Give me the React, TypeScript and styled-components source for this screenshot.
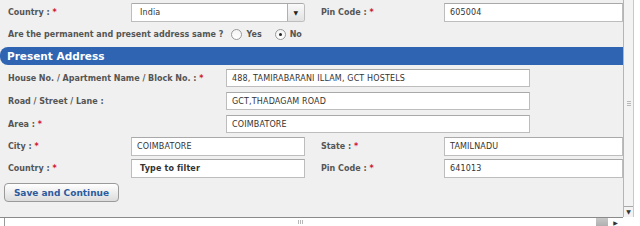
import styled, { createGlobalStyle } from "styled-components";

const GlobalStyle = createGlobalStyle`
  html, body {
    margin: 0;
    padding: 0;
    background: #ffffff;
  }
  body {
    font-family: "DejaVu Sans", Verdana, sans-serif;
  }
`;

const Viewport = styled.div`
  width: 640px;
  height: 226px;
  display: flex;
  flex-direction: column;
  overflow: hidden;
`;

const TopArea = styled.div`
  height: 217px;
  display: flex;
`;

const Content = styled.div`
  width: 623px;
  background: #f0f0f0;
  overflow: hidden;
  display: flex;
  flex-direction: column;
`;

const VScroll = styled.div`
  width: 11px;
  border-left: 1px solid #b5b5b5;
  border-right: 1px solid #c8c8c8;
  background: #f3f3f3;
  display: flex;
  flex-direction: column;
  box-sizing: border-box;
`;

const VThumb = styled.div`
  flex: 1;
  border-bottom: 1px solid #a8a8a8;
  display: flex;
  align-items: center;
  justify-content: center;
`;

const Grip = styled.div<{ $vertical?: boolean }>`
  width: ${({ $vertical }) => ($vertical ? "4px" : "1px")};
  height: ${({ $vertical }) => ($vertical ? "1px" : "4px")};
  box-shadow: ${({ $vertical }) =>
    $vertical
      ? "0 -2px 0 #b8b8b8, 0 2px 0 #b8b8b8"
      : "-2px 0 0 #b8b8b8, 2px 0 0 #b8b8b8"};
  background: #b8b8b8;
`;

const ArrowBox = styled.div`
  height: 10px;
  display: flex;
  align-items: center;
  justify-content: center;
  color: #333;
  font-size: 6px;
  line-height: 1;
`;

const RightEdge = styled.div`
  flex: 1;
  background: #ffffff;
`;

const HScroll = styled.div`
  height: 9px;
  border-top: 1px solid #8a8a8a;
  display: flex;
  box-sizing: border-box;
  width: 623px;
`;

const HTrackStart = styled.div`
  width: 4px;
  border-right: 1px solid #9a9a9a;
`;

const HThumb = styled.div`
  flex: 1;
  background: #ffffff;
  display: flex;
  align-items: center;
  justify-content: center;
`;

const HDark = styled.div`
  width: 12px;
  background: linear-gradient(#c8c8c8, #b0b0b0);
`;

const HArrow = styled.div`
  width: 15px;
  display: flex;
  align-items: center;
  justify-content: center;
  font-size: 6px;
  color: #333;
`;

const Row = styled.div<{ $top: number }>`
  display: grid;
  grid-template-columns: 123px 174px 16px 123px 179px;
  align-items: center;
  padding-left: 8px;
  margin-top: ${({ $top }) => $top}px;
  height: 19px;
`;

const WideRow = styled.div<{ $top: number }>`
  display: grid;
  grid-template-columns: 218px 304px;
  align-items: center;
  padding-left: 8px;
  margin-top: ${({ $top }) => $top}px;
  height: 18px;
`;

const Label = styled.span`
  font-size: 8px;
  font-weight: bold;
  color: #555555;
  white-space: nowrap;
`;

const Star = styled.span`
  color: #d2142d;
`;

const Input = styled.div<{ $bold?: boolean }>`
  height: 100%;
  box-sizing: border-box;
  background: #ffffff;
  border: 1px solid #bdbdbd;
  border-top-color: #a9a9a9;
  font-size: 8px;
  letter-spacing: 0.15px;
  color: #333333;
  font-weight: ${({ $bold }) => ($bold ? "bold" : "normal")};
  padding-left: ${({ $bold }) => ($bold ? "8px" : "5px")};
  display: flex;
  align-items: center;
  white-space: nowrap;
  overflow: hidden;
`;

const Select = styled(Input)`
  padding-right: 0;
  justify-content: space-between;
  border-radius: 0 3px 3px 0;
  padding-left: 8px;
`;

const SelectButton = styled.div`
  width: 17px;
  height: 100%;
  box-sizing: border-box;
  border-left: 1px solid #b0b0b0;
  background: linear-gradient(#fafafa, #e2e2e2);
  display: flex;
  align-items: center;
  justify-content: center;
  font-size: 6px;
  color: #222;
`;

const QuestionRow = styled.div`
  display: flex;
  align-items: center;
  padding-left: 8px;
  margin-top: 4px;
  height: 16px;
`;

const RadioGroup = styled.div`
  display: flex;
  align-items: center;
  margin-left: 5px;
  gap: 4px;
`;

const Radio = styled.span<{ $checked?: boolean }>`
  width: 9px;
  height: 9px;
  border-radius: 50%;
  border: 1px solid #9a9a9a;
  background: linear-gradient(#f4f4f4, #ffffff);
  display: inline-flex;
  align-items: center;
  justify-content: center;
  margin-left: 3px;
  &::after {
    content: "";
    width: 3px;
    height: 3px;
    border-radius: 50%;
    background: ${({ $checked }) => ($checked ? "#222" : "transparent")};
  }
`;

const RadioText = styled.span`
  font-size: 8px;
  font-weight: bold;
  color: #555555;
  margin-right: 6px;
`;

const SectionHeader = styled.div`
  margin-top: 5px;
  height: 18px;
  background: #2e64b2;
  border-radius: 8px 0 0 8px;
  color: #ffffff;
  font-size: 10.5px;
  font-weight: bold;
  display: flex;
  align-items: center;
  padding-left: 7px;
`;

const SaveButton = styled.button`
  margin: 5px 0 0 4px;
  width: 115px;
  height: 19px;
  border: 1px solid #9a9a9a;
  border-radius: 4px;
  background: linear-gradient(#ffffff, #dcdcdc);
  color: #2c5b9e;
  font-family: "DejaVu Sans", Verdana, sans-serif;
  font-size: 9px;
  font-weight: bold;
  padding: 0;
  align-self: flex-start;
`;

const Req = ({ children }: { children: string }) => (
  <Label>
    {children} <Star>*</Star>
  </Label>
);

export default function App() {
  return (
    <>
      <GlobalStyle />
      <Viewport>
        <TopArea>
          <Content>
            <Row $top={3}>
              <Req>Country :</Req>
              <Select>
                India
                <SelectButton>▼</SelectButton>
              </Select>
              <span />
              <Req>Pin Code :</Req>
              <Input>605004</Input>
            </Row>
            <QuestionRow>
              <Label>Are the permanent and present address same ?</Label>
              <RadioGroup>
                <Radio />
                <RadioText>Yes</RadioText>
                <Radio $checked />
                <RadioText>No</RadioText>
              </RadioGroup>
            </QuestionRow>
            <SectionHeader>Present Address</SectionHeader>
            <WideRow $top={4}>
              <Req>House No. / Apartment Name / Block No. :</Req>
              <Input>488, TAMIRABARANI ILLAM, GCT HOSTELS</Input>
            </WideRow>
            <WideRow $top={5}>
              <Label>Road / Street / Lane :</Label>
              <Input>GCT,THADAGAM ROAD</Input>
            </WideRow>
            <WideRow $top={5}>
              <Req>Area :</Req>
              <Input>COIMBATORE</Input>
            </WideRow>
            <Row $top={4}>
              <Req>City :</Req>
              <Input>COIMBATORE</Input>
              <span />
              <Req>State :</Req>
              <Input>TAMILNADU</Input>
            </Row>
            <Row $top={3}>
              <Req>Country :</Req>
              <Input $bold>Type to filter</Input>
              <span />
              <Req>Pin Code :</Req>
              <Input>641013</Input>
            </Row>
            <SaveButton>Save and Continue</SaveButton>
          </Content>
          <VScroll>
            <VThumb>
              <Grip $vertical />
            </VThumb>
            <ArrowBox>▼</ArrowBox>
          </VScroll>
          <RightEdge />
        </TopArea>
        <HScroll>
          <HTrackStart />
          <HThumb>
            <Grip />
          </HThumb>
          <HDark />
          <HArrow>▶</HArrow>
        </HScroll>
      </Viewport>
    </>
  );
}
